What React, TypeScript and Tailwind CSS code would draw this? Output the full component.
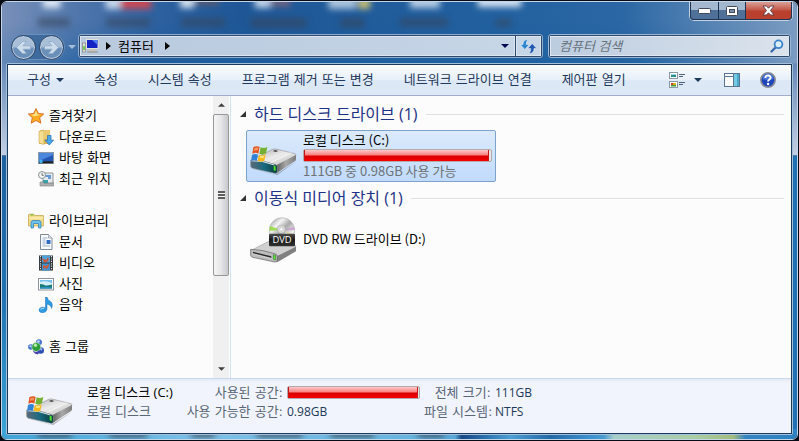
import type { ReactNode } from "react";

const hangul = "font-['DejaVu_Sans','Noto_Sans_CJK_KR',sans-serif]";
const mixed = "font-['Open_Sans','Noto_Sans_CJK_KR',sans-serif]";

/* ---------- desktop behind the glass ---------- */

function Backdrop() {
  return (
    <svg className="absolute inset-0 h-full w-full" viewBox="0 0 799 441" preserveAspectRatio="none" aria-hidden="true">
      <defs>
        <linearGradient id="glass-top" x1="0" y1="0" x2="1" y2="0">
          <stop offset="0" stopColor="#7890b9" />
          <stop offset="0.1" stopColor="#4e75ab" />
          <stop offset="0.2" stopColor="#2c609f" />
          <stop offset="0.3" stopColor="#1f5796" />
          <stop offset="0.62" stopColor="#22609f" />
          <stop offset="0.78" stopColor="#2b67a4" />
          <stop offset="0.9" stopColor="#5a86b5" />
          <stop offset="1" stopColor="#7c9cc1" />
        </linearGradient>
        <linearGradient id="glass-mid" x1="0" y1="0" x2="1" y2="0">
          <stop offset="0" stopColor="#5f86b5" />
          <stop offset="0.09" stopColor="#2f68a4" />
          <stop offset="0.16" stopColor="#1f5c9b" />
          <stop offset="0.45" stopColor="#1d5fa0" />
          <stop offset="0.8" stopColor="#2264a1" />
          <stop offset="0.93" stopColor="#5885b5" />
          <stop offset="1" stopColor="#7b9cc2" />
        </linearGradient>
        <linearGradient id="glass-fade" x1="0" y1="0" x2="0" y2="1">
          <stop offset="0.3" stopColor="#fff" stopOpacity="0" />
          <stop offset="1" stopColor="#fff" stopOpacity="1" />
        </linearGradient>
        <mask id="glass-mask">
          <rect width="799" height="66" fill="url(#glass-fade)" />
        </mask>
        <linearGradient id="glass-shine" x1="0" y1="0" x2="0" y2="1">
          <stop offset="0" stopColor="#6489b8" />
          <stop offset="1" stopColor="#c3d0e4" />
        </linearGradient>
        <linearGradient id="glass-left" x1="0" y1="0" x2="0" y2="1">
          <stop offset="0" stopColor="#1d609f" />
          <stop offset="0.5" stopColor="#2172b2" />
          <stop offset="1" stopColor="#3ba5d6" />
        </linearGradient>
        <linearGradient id="glass-bottom" x1="0" y1="0" x2="1" y2="0">
          <stop offset="0" stopColor="#3ea4d8" />
          <stop offset="0.25" stopColor="#7cc0e8" />
          <stop offset="0.52" stopColor="#65b4e0" />
          <stop offset="0.57" stopColor="#56a8d8" />
          <stop offset="0.578" stopColor="#194884" />
          <stop offset="0.61" stopColor="#2c74b0" />
          <stop offset="0.64" stopColor="#4c9fd4" />
          <stop offset="0.69" stopColor="#2369a8" />
          <stop offset="0.74" stopColor="#3c92cf" />
          <stop offset="0.757" stopColor="#4a9bd0" />
          <stop offset="0.77" stopColor="#a8cfc8" />
          <stop offset="0.87" stopColor="#a9cda4" />
          <stop offset="0.92" stopColor="#a4bc7c" />
          <stop offset="0.935" stopColor="#3484c2" />
          <stop offset="1" stopColor="#2e82c2" />
        </linearGradient>
        <filter id="soft" x="-50%" y="-50%" width="200%" height="200%">
          <feGaussianBlur stdDeviation="3" />
        </filter>
      </defs>
      <rect width="799" height="66" fill="url(#glass-top)" />
      <rect width="799" height="66" fill="url(#glass-mid)" mask="url(#glass-mask)" />
      <rect y="62" width="799" height="93" fill="url(#glass-shine)" />
      <rect y="155" width="12" height="286" fill="url(#glass-left)" />
      <rect x="787" y="155" width="12" height="286" fill="#2171b2" />
      <rect y="431" width="799" height="10" fill="url(#glass-bottom)" />
      <g filter="url(#soft)">
        <rect x="41" y="-6" width="18" height="12" fill="#dbe7f5" />
        <rect x="104" y="-6" width="16" height="13" fill="#c5d6ea" />
        <rect x="119" y="-6" width="31" height="13" fill="#c94a55" />
        <rect x="179" y="-6" width="14" height="12" fill="#d6e2f0" />
        <rect x="194" y="-6" width="24" height="9" fill="#5b5a70" />
        <rect x="254" y="-6" width="16" height="12" fill="#c0d3e8" />
        <rect x="270" y="-6" width="20" height="11" fill="#6c6484" />
        <rect x="328" y="-6" width="28" height="13" fill="#a9c2dc" />
        <rect x="358" y="-4" width="12" height="11" fill="#c7be74" />
        <rect x="410" y="-6" width="30" height="12" fill="#b6cde6" />
        <rect x="478" y="-6" width="44" height="11" fill="#d5e4f5" />
      </g>
      <g filter="url(#soft)" fill="#34475f" opacity="0.6">
        <rect x="36" y="16" width="32" height="9" />
        <rect x="105" y="16" width="44" height="9" />
        <rect x="180" y="16" width="44" height="9" />
        <rect x="250" y="16" width="56" height="10" />
        <rect x="340" y="16" width="24" height="10" />
        <rect x="400" y="16" width="48" height="9" />
        <rect x="496" y="17" width="16" height="8" />
      </g>
      <g filter="url(#soft)" fill="#3d4f5e">
        <rect x="36" y="433" width="34" height="6" />
        <rect x="108" y="433" width="38" height="6" />
        <rect x="190" y="433" width="24" height="6" />
        <rect x="256" y="433" width="46" height="6" />
        <rect x="330" y="433" width="44" height="6" />
        <rect x="418" y="433" width="26" height="6" />
      </g>
    </svg>
  );
}

/* ---------- icons ---------- */

function Caret({ className }: { className?: string }) {
  return (
    <svg className={className} width="8" height="4" viewBox="0 0 8 4" aria-hidden="true">
      <path d="M0 0h8L4 4z" fill="currentColor" />
    </svg>
  );
}

function RightCaret() {
  return (
    <svg width="5" height="8" viewBox="0 0 5 8" aria-hidden="true">
      <path d="M0 0v8l5-4z" fill="#000" />
    </svg>
  );
}

function WindowsFlag() {
  return (
    <g>
      <path d="M10 7c8-5 14-4 19-1l-4 20c-6-4-12-3-18 1z" fill="#e2501f" />
      <path d="M32 7c7 3 13 3 20-1l-4 19c-7 4-13 4-20 1z" fill="#76b030" />
      <path d="M6 30c7-4 13-4 18-1l-4 19c-5-3-11-3-17 1z" fill="#2f82d6" />
      <path d="M27 29c7 3 13 3 20-1l-4 19c-7 4-13 3-20 0z" fill="#f8b81c" />
      <path d="M13 10c6-3 9-3 12-1l-2 8c-4-2-8-1-12 1z" fill="#f7955f" />
      <path d="M30 32c6 2 9 1 13 0l-2 6c-4 2-8 1-12 0z" fill="#ffe27a" />
    </g>
  );
}

function DriveIcon() {
  return (
    <svg className="h-[30px] w-12 shrink-0" viewBox="0 0 144 90" aria-hidden="true">
      <defs>
        <linearGradient id="drive-top" x1="0" y1="0" x2="1" y2="1">
          <stop offset="0" stopColor="#a6a6a6" />
          <stop offset="0.5" stopColor="#ececec" />
          <stop offset="1" stopColor="#b4b4b4" />
        </linearGradient>
        <linearGradient id="drive-side" x1="0" y1="0" x2="1" y2="0">
          <stop offset="0" stopColor="#5c5c5c" />
          <stop offset="0.5" stopColor="#a9a9a9" />
          <stop offset="1" stopColor="#7d7d7d" />
        </linearGradient>
        <linearGradient id="drive-front" x1="0" y1="0" x2="1" y2="0">
          <stop offset="0" stopColor="#5b6a78" />
          <stop offset="0.5" stopColor="#1a6a80" />
          <stop offset="1" stopColor="#0a3a3a" />
        </linearGradient>
      </defs>
      <path d="M8 72l68 17 64-40-60 42z" fill="#555" opacity="0.45" />
      <path d="M3 46L68 13q5-2 10-1l57 14q5 2 2 6L82 62q-4 2-8 1z" fill="url(#drive-top)" stroke="#858585" strokeWidth="1.5" />
      <path d="M80 60l58-30v13q0 3-3 5L84 82q-4 3-6 3z" fill="url(#drive-side)" />
      <path d="M2 45q36-1 72 13 7 2 8 6v17q-1 5-8 4L8 70q-5-1-6-6z" fill="url(#drive-front)" stroke="#8d9499" strokeWidth="2" />
      <path d="M3 47q35-1 70 13" stroke="#dfe4e6" strokeWidth="3" fill="none" />
      <path d="M71 62l6 2v14l-6-2z" fill="#4ae62c" />
      <path d="M68 18l8-3 9 3-8 3z" fill="#444" />
      <path d="M62 53l62-30" stroke="#fff" strokeWidth="4" opacity="0.5" />
      <WindowsFlag />
    </svg>
  );
}

function DvdIcon() {
  return (
    <svg className="h-[46px] w-12 shrink-0" viewBox="0 0 144 138" aria-hidden="true">
      <defs>
        <linearGradient id="disc" x1="0" y1="0" x2="1" y2="1">
          <stop offset="0" stopColor="#8f8f8f" />
          <stop offset="0.3" stopColor="#f4f4f4" />
          <stop offset="0.5" stopColor="#a9a9a9" />
          <stop offset="0.75" stopColor="#f0f0f0" />
          <stop offset="1" stopColor="#8a8a8a" />
        </linearGradient>
        <linearGradient id="dvd-label" x1="0" y1="0" x2="0" y2="1">
          <stop offset="0" stopColor="#4c4c4c" />
          <stop offset="0.5" stopColor="#1a1a1a" />
          <stop offset="1" stopColor="#333" />
        </linearGradient>
      </defs>
      <path d="M4 100L62 70q5-2 10-1l63 16q5 2 2 6l-55 29q-4 2-8 1z" fill="#d0d0d0" stroke="#8a8a8a" strokeWidth="1.5" />
      <path d="M80 118l58-29v14L84 134q-3 2-5 1z" fill="#808080" />
      <path d="M2 97q36 1 72 13 7 2 8 6v14q-1 6-8 5L8 121q-5-1-6-6z" fill="#bdbdbd" stroke="#5a5a5a" strokeWidth="2" />
      <path d="M9 104l55 14v6L9 110z" fill="#2a2a2a" />
      <path d="M9 110l55 14" stroke="#fff" strokeWidth="2" />
      <path d="M70 113l7 2v14l-7-2z" fill="#4ae62c" stroke="#222" strokeWidth="1" />
      <circle cx="96" cy="40" r="38" fill="url(#disc)" stroke="#9b9b9b" strokeWidth="1.5" />
      <path d="M96 40L60 27l-2 14z" fill="#93dc3c" opacity="0.85" />
      <path d="M96 40l37-10 1 9z" fill="#c992d2" opacity="0.7" />
      <path d="M96 40l35 12-3 6z" fill="#dfd890" opacity="0.8" />
      <circle cx="94" cy="37" r="12" fill="#dedede" stroke="#a6a6a6" strokeWidth="2" />
      <circle cx="94" cy="37" r="5" fill="#fff" stroke="#999" strokeWidth="1" />
      <rect x="57" y="50" width="78" height="38" rx="4" fill="url(#dvd-label)" />
      <text x="96" y="79" textAnchor="middle" fontSize="28" fontFamily="'Open Sans', sans-serif" fill="#fff">
        DVD
      </text>
    </svg>
  );
}

function Small({ children }: { children: ReactNode }) {
  return (
    <svg className="shrink-0" width="16" height="16" viewBox="0 0 16 16" aria-hidden="true">
      {children}
    </svg>
  );
}

const icons = {
  star: (
    <Small>
      <path d="M8 .5l2.300 4.900 5.400.6-4 3.700 1.100 5.500L8 12.500l-4.800 2.700 1.100-5.500L.3 6l5.400-.6z" fill="#fbab1f" stroke="#d56a25" strokeWidth="0.9" />
      <path d="M8 2.500l1.400 3.900 3.600.4-6.800 1.500-3.500-1.500 3.700-.4z" fill="#ffe795" />
    </Small>
  ),
  download: (
    <Small>
      <path d="M1 2.500l2-1.500h8v14H1z" fill="#d9b551" />
      <path d="M1 2.500L6 1v14.500L1 14z" fill="#f5df92" stroke="#c7a74e" strokeWidth="0.6" />
      <path d="M6 1h6v9H6z" fill="#ebcb70" />
      <path d="M9.500 6.500h3.500v4.700h2.600L11.300 16 7 11.200h2.500z" fill="#4aa8ea" stroke="#1f6db5" strokeWidth="0.7" />
    </Small>
  ),
  desktop: (
    <Small>
      <rect x="0.500" y="2.500" width="15" height="11" fill="#2456b4" stroke="#8a98a8" />
      <path d="M1 3h14v2L1 11z" fill="#4d86dd" />
      <rect x="1" y="11.300" width="14" height="2" fill="#222" />
      <circle cx="3" cy="11.500" r="1.800" fill="#3cb3ea" />
    </Small>
  ),
  recent: (
    <Small>
      <path d="M5 2h10v10H5z" fill="#e6eaee" stroke="#8f959a" />
      <path d="M7 5h6M10 7h3" stroke="#3f7fd0" strokeWidth="1.400" />
      <path d="M5 9h5v3H5z" fill="#3aa0a8" />
      <path d="M2 11h3l1 1.500h8l2-1v3.500H2z" fill="#aeb0b2" stroke="#808080" strokeWidth="0.600" />
      <circle cx="4" cy="4" r="3.500" fill="#f2f4f5" stroke="#8e9599" />
      <path d="M4 2v2.300h1.800" stroke="#555" strokeWidth="0.800" fill="none" />
    </Small>
  ),
  library: (
    <Small>
      <path d="M.5 2q0-.8.800-.8h4.500l1 1.300h8.200q.700 0 .700.700V13H.5z" fill="#f3dc8a" stroke="#c6a750" strokeWidth="0.8" />
      <path d="M2.500 2h3" stroke="#63b52d" strokeWidth="1.200" />
      <path d="M1 5h14" stroke="#fff4c4" />
      <path d="M3 15V9.500q0-2 2-2h6q2 0 2 2V15h-2.500v-4.500h-5V15z" fill="#6fc3ea" stroke="#3585bd" strokeWidth="0.800" />
    </Small>
  ),
  document: (
    <Small>
      <path d="M2.500.5h8l3.500 3.500v11.500H2.500z" fill="#fcfdfe" stroke="#7f8b97" />
      <path d="M10.500.5V4H14" fill="#dfe5ea" stroke="#8b97a3" strokeWidth="0.700" />
      <path d="M4.500 4h5M4.500 6h3M4.500 8h3M4.500 10h3M4.500 12h7.500" stroke="#8ea8c8" strokeWidth="0.900" />
      <rect x="8.500" y="6" width="4" height="4" fill="#2f6cc4" />
    </Small>
  ),
  video: (
    <Small>
      <rect x="1" y="0.500" width="14" height="15" fill="#30353a" />
      <rect x="4" y="0.500" width="8" height="7" fill="#4ea3dc" />
      <rect x="4" y="8.500" width="8" height="7" fill="#3c92d2" />
      <path d="M4 3l4 2 2-3 1 3-3 2.500H6zM5 10l3 1 3-2v2l-2 3-2-1-2 1z" fill="#c65a3c" />
      <path d="M2.500 1v14M13.500 1v14" stroke="#dfe5e8" strokeWidth="1.200" strokeDasharray="1.200 1.200" />
    </Small>
  ),
  picture: (
    <Small>
      <rect x="0.500" y="2.500" width="15" height="11.500" fill="#fff" stroke="#8c959e" />
      <rect x="2" y="4" width="12" height="8.500" fill="#79c0ee" />
      <path d="M2 6q5-2 12 1v2H2z" fill="#d5eefa" />
      <path d="M2 8q4 0 6 2l6-1.500v4H2z" fill="#1c7a73" />
      <path d="M2 11.500q6-1.500 12 0v1H2z" fill="#2c8fc4" />
    </Small>
  ),
  music: (
    <Small>
      <path d="M7.500 0h1.500q.5 3 3.500 4.500 3 2 1 7-.2-3.500-4.500-4.500v4.500q0 4-4.500 4.200Q1 15.500 1 13q.3-2.800 4-2.800 1.500 0 2.500.6z" fill="#2f9be4" stroke="#1b6db4" strokeWidth="0.500" />
      <path d="M2.500 12.500q.8-1.500 3.500-1.200" stroke="#a6dcfa" strokeWidth="1.200" fill="none" />
    </Small>
  ),
  homegroup: (
    <Small>
      <circle cx="11" cy="3.300" r="3" fill="#4b74d0" />
      <circle cx="2.900" cy="8" r="2.800" fill="#3f73c8" />
      <circle cx="12.700" cy="11.500" r="3.300" fill="#2c4fb4" />
      <circle cx="8.300" cy="8" r="4.500" fill="#2f9e38" stroke="#e3eef0" strokeWidth="0.600" />
      <path d="M4.500 11.500q4 3 7-.5l-1 4q-3.500 1-6-3.500z" fill="#4b3fb4" />
      <circle cx="10.500" cy="2.500" r="1.200" fill="#c4d8fa" />
      <circle cx="2.300" cy="7.200" r="1" fill="#c2d6f8" />
      <circle cx="7.500" cy="6.300" r="1.700" fill="#b6ecac" />
      <circle cx="13.300" cy="10.300" r="1.100" fill="#a9bcf0" />
    </Small>
  ),
};

/* ---------- data ---------- */

const commands = ["속성", "시스템 속성", "프로그램 제거 또는 변경", "네트워크 드라이브 연결", "제어판 열기"];

const groups = [
  {
    title: "즐겨찾기",
    icon: icons.star,
    items: [
      { label: "다운로드", icon: icons.download },
      { label: "바탕 화면", icon: icons.desktop },
      { label: "최근 위치", icon: icons.recent },
    ],
  },
  {
    title: "라이브러리",
    icon: icons.library,
    items: [
      { label: "문서", icon: icons.document },
      { label: "비디오", icon: icons.video },
      { label: "사진", icon: icons.picture },
      { label: "음악", icon: icons.music },
    ],
  },
  { title: "홈 그룹", icon: icons.homegroup, items: [] },
];

/* ---------- parts ---------- */

function CaptionButtons() {
  const glass = "flex h-[17px] items-center justify-center bg-linear-to-b from-[#a3b7cf] from-45% to-[#4f7099] to-50%";
  return (
    <div className="flex h-[19px] rounded-b-[5px] border border-t-0 border-[#c3d1e2] bg-[#1d3555]">
      <div className="flex gap-px overflow-hidden rounded-b-[4px] border border-t-0 border-[#1d3555]">
        <button type="button" aria-label="최소화" className={`${glass} w-[27px]`}>
          <svg width="13" height="6" viewBox="0 0 13 6">
            <rect x="0.5" y="0.5" width="12" height="5" rx="1" fill="#fff" stroke="#424a5c" />
          </svg>
        </button>
        <button type="button" aria-label="최대화" className={`${glass} w-[26px]`}>
          <svg width="12" height="10" viewBox="0 0 12 10">
            <rect x="0.5" y="0.5" width="11" height="9" rx="1" fill="#fff" stroke="#424a5c" />
            <rect x="3.500" y="3.500" width="5" height="3" fill="#7c93b1" stroke="#424a5c" />
          </svg>
        </button>
        <button
          type="button"
          aria-label="닫기"
          className="flex h-[17px] w-[45px] items-center justify-center bg-linear-to-b from-[#d9a096] via-[#c4594a] via-45% to-[#b8402c] to-55%"
        >
          <svg width="13" height="11" viewBox="0 0 13 11">
            <path d="M1 1h3.500l2 2.200 2-2.200H12L8.500 5.500 12 10H8.500l-2-2.200-2 2.200H1l3.500-4.500z" fill="#fff" stroke="#5a3a44" strokeWidth="0.900" />
          </svg>
        </button>
      </div>
    </div>
  );
}

function NavButtons() {
  return (
    <div className="flex w-[68px] shrink-0 items-center">
      <div className="flex h-[26px] items-center gap-[3px] rounded-full border border-[#6a8fbb] bg-[#3f6a9e]">
        {["뒤로", "앞으로"].map((label, i) => (
          <button
            key={label}
            type="button"
            aria-label={label}
            className="flex size-[25px] items-center justify-center rounded-full border border-[#31486a] bg-linear-to-b from-[#a9bfd8] from-45% to-[#6a8fb9] to-55% inset-ring inset-ring-[#b8cbe0]"
          >
            <svg className={i ? "" : "rotate-180"} width="17" height="15" viewBox="0 0 17 15">
              <path d="M1.500 5.800h7.500L5.500 1.500h4L15.500 7.500l-6 6h-4L9 9.200H1.500z" fill="#cddceb" stroke="#8fabc9" strokeWidth="0.800" />
            </svg>
          </button>
        ))}
      </div>
      <button type="button" aria-label="최근 페이지" className="ml-[3px] text-[#a3bddb]">
        <Caret />
      </button>
    </div>
  );
}

function AddressBar() {
  return (
    <div className="flex h-6 flex-1 rounded-[3px] border border-[#8daccf] bg-[#2d4a6c] p-px">
      <div className="flex flex-1 items-center gap-[7px] border border-[#dbe6f1] bg-linear-to-r from-[#b9c9de] to-[#c6d6e7] pr-[5px] pl-px">
        <svg width="17" height="16" viewBox="0 0 17 16" aria-hidden="true">
          <rect x="4.500" y="1.500" width="11.500" height="9" fill="#1422c4" stroke="#e3e2d6" />
          <path d="M10 2h5.500v5z" fill="#4d7df0" />
          <path d="M8 11h5l1 3H6z" fill="#c9c6b9" />
          <path d="M5 14h11" stroke="#8d8c84" strokeWidth="1.200" />
          <rect x="0.500" y="5" width="3" height="9" fill="#dfe0d8" stroke="#83847c" strokeWidth="0.700" />
          <path d="M2 8v4" stroke="#4cc430" strokeWidth="1.400" />
        </svg>
        <RightCaret />
        <span className="text-[13px] leading-4 text-black">컴퓨터</span>
        <span className="pl-1">
          <RightCaret />
        </span>
        <button type="button" aria-label="이전 위치" className="ml-auto text-[#020a52]">
          <Caret />
        </button>
      </div>
      <button type="button" aria-label="새로 고침" className="ml-px flex w-[25px] items-center justify-center border border-[#dbe6f1] bg-[#c6d6e7]">
        <svg width="17" height="15" viewBox="0 0 17 15">
          <path d="M8 .5Q3 .5 3 5.500H.3l4.500 5 4.500-5H6.300Q6 2.500 8 .5z" fill="#2f86d0" stroke="#f4f8fc" strokeWidth="0.500" />
          <path d="M9 14.500q5 0 5-5h2.700l-4.500-5-4.500 5h3q.3 3-1.700 5z" fill="#2259b0" stroke="#f4f8fc" strokeWidth="0.500" />
        </svg>
      </button>
    </div>
  );
}

function SearchBox() {
  return (
    <div className="ml-[5px] h-6 w-[243px] rounded-[3px] border border-[#9cb7d5] bg-[#2d4a6c] p-px">
      <label className="flex h-full items-center border border-[#dfe8f2] bg-linear-to-r from-[#bccde0] to-[#dbe3ec] pr-1 pl-2">
        <input
          type="search"
          aria-label="컴퓨터 검색"
          placeholder="컴퓨터 검색"
          className={`${mixed} h-[18px] min-w-0 flex-1 bg-transparent text-[13px] leading-[18px] outline-none placeholder:text-[#66717a] placeholder:italic`}
        />
        <svg width="14" height="14" viewBox="0 0 14 14" aria-hidden="true">
          <path d="M5.500 8.500l-4 4" stroke="#3565a6" strokeWidth="2.200" strokeLinecap="round" />
          <circle cx="8.500" cy="5.300" r="3.900" fill="#d9edfb" stroke="#3a82c8" strokeWidth="1.800" />
        </svg>
      </label>
    </div>
  );
}

function Toolbar() {
  const item = "h-full px-[15px] whitespace-nowrap";
  return (
    <div
      className={`${hangul} flex h-[31px] items-center border-b border-[#a0aec9] bg-linear-to-b from-[#fbfdff] via-[#e7eff9] via-50% to-[#dde8f6] to-52% pr-[15px] pl-1 text-[13px] leading-4 text-[#1e395b]`}
    >
      <button type="button" className={`${item} flex items-center gap-[5px]`}>
        구성 <Caret />
      </button>
      {commands.map((label) => (
        <button key={label} type="button" className={item}>
          {label}
        </button>
      ))}
      <div className="ml-auto flex items-center">
        <button type="button" aria-label="보기 변경">
          <svg width="16" height="16" viewBox="0 0 16 16">
            <rect x="0.500" y="0.500" width="8" height="6" fill="#fff" stroke="#8c98a6" />
            <rect x="2" y="2" width="5" height="3" fill="#2b8f8c" />
            <path d="M2 2.500h5" stroke="#8fd4f4" />
            <rect x="0.500" y="9.500" width="8" height="6" fill="#fff" stroke="#8c98a6" />
            <path d="M2 11h2v2H2z" fill="#c6432c" />
            <path d="M4 11h3v2H4z" fill="#d8ae1c" />
            <path d="M2 13h5v1.500H2z" fill="#3d9f35" />
            <path d="M10 2.500h6M10 4.500h4M10 10.500h6M10 12.500h4" stroke="#4f6079" />
          </svg>
        </button>
        <button type="button" aria-label="추가 옵션" className="px-[9px]">
          <Caret />
        </button>
        <button type="button" aria-label="미리 보기 창" className="ml-[13px]">
          <svg width="16" height="14" viewBox="0 0 16 14">
            <rect x="0.500" y="0.500" width="15" height="13" fill="#fff" stroke="#5c7595" />
            <path d="M1 3.500h9" stroke="#5c7595" />
            <rect x="10" y="1" width="5" height="12" fill="#74cbe4" />
            <path d="M13 1h2v12h-2z" fill="#4ba9cc" />
            <path d="M9.500 1v12" stroke="#5c7595" />
          </svg>
        </button>
        <button type="button" aria-label="도움말" className="ml-5">
          <svg width="16" height="16" viewBox="0 0 16 16">
            <circle cx="8" cy="8" r="7.200" fill="#1f46b8" stroke="#8d8f96" strokeWidth="1.600" />
            <path d="M2.500 7a5.500 5 0 0111 0Q8 9 2.500 7z" fill="#4a76dc" />
            <path d="M5.300 5.800q.3-2.300 2.700-2.300t2.600 2.100q0 1.300-1.500 2.100-1 .6-1 1.700" fill="none" stroke="#fff" strokeWidth="1.900" />
            <circle cx="8.100" cy="12" r="1.200" fill="#fff" />
          </svg>
        </button>
      </div>
    </div>
  );
}

function Sidebar() {
  return (
    <aside className="flex w-[223px] shrink-0 border-r border-[#d3e2f3]">
      <nav className={`${hangul} flex flex-1 flex-col gap-[21px] pt-[9px] pl-5 text-[13px] leading-[21px] text-black`}>
        {groups.map((group) => (
          <ul key={group.title}>
            <li>
              <a href="#" className="flex items-center gap-[5px]">
                {group.icon} {group.title}
              </a>
            </li>
            {group.items.map((item) => (
              <li key={item.label} className="pl-[10px]">
                <a href="#" className="flex items-center gap-[5px]">
                  {item.icon} {item.label}
                </a>
              </li>
            ))}
          </ul>
        ))}
      </nav>
      <div className="mr-px flex w-4 flex-col bg-[#f0f0f0]">
        <button type="button" aria-label="위로 스크롤" className="flex h-[18px] items-center justify-center text-[#404040]">
          <Caret className="w-[7px] rotate-180" />
        </button>
        <div className="min-h-0 flex-1">
          <div className="flex h-[66%] items-center justify-center rounded-[2px] border border-[#979797] bg-linear-to-r from-[#f6f6f6] via-[#e6e6e8] via-50% to-[#c9c9cd]">
            <div className="h-[8px] w-[7px] bg-[repeating-linear-gradient(#5c5c5c_0_2px,#f5f5f5_2px_3px)]" />
          </div>
        </div>
        <button type="button" aria-label="아래로 스크롤" className="flex h-[18px] items-center justify-center text-[#404040]">
          <Caret className="w-[7px]" />
        </button>
      </div>
    </aside>
  );
}

function UsageBar({ className, percent }: { className: string; percent: number }) {
  return (
    <div
      role="progressbar"
      aria-label="사용된 공간"
      aria-valuenow={percent}
      className={`${className} h-[13px] rounded-[2px] border border-[#b3a9ad] bg-[#e6e6e6]`}
    >
      <div
        className="h-full bg-[linear-gradient(#ffcaca,#fb8080_45%,#d80000_55%,#f80000)] shadow-[inset_1px_0_0_#c81414,inset_-1px_0_0_#c81414]"
        style={{ width: `${percent}%` }}
      />
    </div>
  );
}

function Section({ title, children }: { title: string; children: ReactNode }) {
  return (
    <section>
      <h2 className={`${mixed} flex h-5 items-center text-base leading-5 whitespace-nowrap text-[#1e3287]`}>
        <svg className="mr-2" width="6" height="6" viewBox="0 0 6 6" aria-hidden="true">
          <path d="M6 0v6H0z" fill="#333" />
        </svg>
        {title}
        <span className="ml-2 h-px flex-1 bg-[#e0e0e2]" />
      </h2>
      <div className="py-1.5 pl-[6px]">{children}</div>
    </section>
  );
}

function Drives() {
  const tile = "flex h-[52px] w-[250px] items-center gap-[5px] rounded-[2px] border pl-[3px] text-left text-[13px] leading-4";
  return (
    <main className="min-w-0 flex-1 pt-2 pr-[7px] pl-[9px]">
      <Section title="하드 디스크 드라이브 (1)">
        <button type="button" className={`${tile} border-[#7da2ce] bg-linear-to-b from-[#dceafb] to-[#c1dbfc]`}>
          <span className="pt-2">
            <DriveIcon />
          </span>
          <span className="flex w-[189px] flex-col pb-px">
            <span className="text-black">로컬 디스크 (C:)</span>
            <UsageBar className="my-px" percent={99} />
            <span className="text-[#6d7278]">111GB 중 0.98GB 사용 가능</span>
          </span>
        </button>
      </Section>
      <Section title="이동식 미디어 장치 (1)">
        <button type="button" className={`${tile} border-transparent`}>
          <DvdIcon />
          <span className="pb-0.5 text-black">DVD RW 드라이브 (D:)</span>
        </button>
      </Section>
    </main>
  );
}

function DetailsPane() {
  const label = `${hangul} text-right text-[#5a6779]`;
  const value = `${mixed} text-xs leading-[19px]`;
  return (
    <footer className="flex h-[55px] items-center border-t border-[#c9d7ee] bg-[#f1f4fc] pb-2 text-[13px] leading-[19px] whitespace-nowrap shadow-[inset_0_2px_2px_#e4ebf7]">
      <span className="mr-[13px] ml-[18px] pt-4">
        <DriveIcon />
      </span>
      <div className="w-[98px] shrink-0">
        <p className={`${mixed} text-black`}>로컬 디스크 (C:)</p>
        <p className={`${hangul} text-[#5a6779]`}>로컬 디스크</p>
      </div>
      <dl className="grid grid-cols-[98px_133px_67px_auto] items-center gap-x-1 text-[#1e395b]">
        <dt className={label}>사용된 공간:</dt>
        <dd>
          <UsageBar className="w-full" percent={99} />
        </dd>
        <dt className={label}>전체 크기:</dt>
        <dd className={value}>111GB</dd>
        <dt className={label}>사용 가능한 공간:</dt>
        <dd className={value}>0.98GB</dd>
        <dt className={label}>파일 시스템:</dt>
        <dd className={value}>NTFS</dd>
      </dl>
    </footer>
  );
}

export default function App() {
  return (
    <div className="flex min-h-screen flex-col bg-[#060b16] p-px font-['Noto_Sans_CJK_KR',sans-serif]">
      <div className="relative flex flex-1 flex-col overflow-hidden rounded-[6px] border border-[#c4d6e8]">
        <Backdrop />
        <div className="relative flex flex-1 flex-col px-1 pb-1">
          <header>
            <div className="flex h-8 items-start justify-end">
              <CaptionButtons />
            </div>
            <div className="flex h-[29px] items-start pr-[2px] pl-1">
              <NavButtons />
              <AddressBar />
              <SearchBox />
            </div>
          </header>
          <div className="flex flex-1 flex-col rounded-[2px] border border-[#a3bfda]">
            <div className="flex flex-1 flex-col border border-[#1c3a5c] bg-[#fcfcfc]">
              <Toolbar />
              <div className="flex flex-1">
                <Sidebar />
                <Drives />
              </div>
              <DetailsPane />
            </div>
          </div>
        </div>
      </div>
    </div>
  );
}
